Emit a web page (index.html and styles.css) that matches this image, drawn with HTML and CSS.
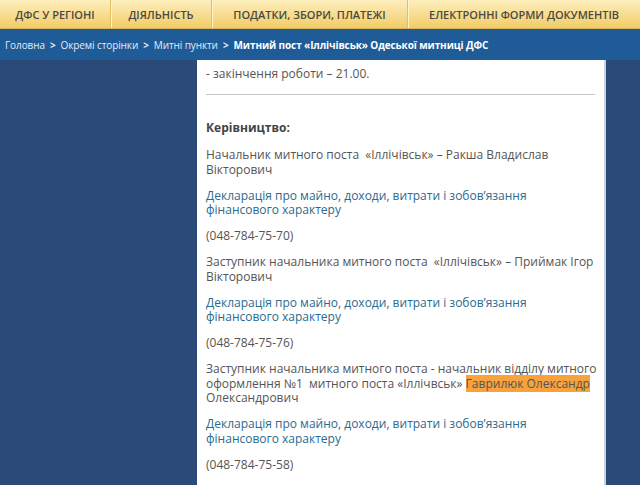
FILE: index.html
```html
<!DOCTYPE html>
<html lang="uk">
<head>
  <meta charset="UTF-8">
  <title>Митний пост «Іллічівськ»</title>
  <link rel="stylesheet" href="styles.css">
</head>
<body>
  <nav class="top-nav">
    <a class="nav-item nav-first" href="#">ДФС У РЕГІОНІ</a>
    <a class="nav-item nav-second" href="#">ДІЯЛЬНІСТЬ</a>
    <a class="nav-item nav-third" href="#">ПОДАТКИ, ЗБОРИ, ПЛАТЕЖІ</a>
    <a class="nav-item nav-last" href="#">ЕЛЕКТРОННІ ФОРМИ ДОКУМЕНТІВ</a>
  </nav>

  <div class="crumbs">
    <a href="#">Головна</a>
    <span class="sep">&gt;</span>
    <a href="#">Окремі сторінки</a>
    <span class="sep">&gt;</span>
    <a href="#">Митні пункти</a>
    <span class="sep">&gt;</span>
    <span class="current">Митний пост «Іллічівськ» Одеської митниці ДФС</span>
  </div>

  <div class="page">
    <div class="content">
      <p>- закінчення роботи – 21.00.</p>
      <hr>
      <p class="head">Керівництво:</p>

      <p>Начальник митного поста &nbsp;«Іллічівськ» – Ракша Владислав Вікторович</p>
      <p><a href="#">Декларація про майно, доходи, витрати і зобов’язання фінансового характеру</a></p>
      <p>(048-784-75-70)</p>

      <p>Заступник начальника митного поста &nbsp;«Іллічівськ» – Приймак Ігор Вікторович</p>
      <p><a href="#">Декларація про майно, доходи, витрати і зобов’язання фінансового характеру</a></p>
      <p>(048-784-75-76)</p>

      <p>Заступник начальника митного поста - начальник відділу митного оформлення №1 &nbsp;митного поста «Іллічвськ» <mark>Гаврилюк Олександр</mark> Олександрович</p>
      <p><a href="#">Декларація про майно, доходи, витрати і зобов’язання фінансового характеру</a></p>
      <p>(048-784-75-58)</p>
    </div>
  </div>
</body>
</html>
```

FILE: styles.css
```css
* {
  margin: 0;
  padding: 0;
  box-sizing: border-box;
}

body, html {
  height: 100%;
  background-color: #2c4a77;
  font-family: 'Open Sans', sans-serif;
}

.top-nav {
  display: flex;
  height: 29px;
  background: linear-gradient(#fdefbd, #f2cc68);
  border-bottom: 1px solid #d9b455;
}

.nav-item {
  display: flex;
  align-items: center;
  justify-content: center;
  height: 100%;
  color: #4b4a40;
  font-size: 11px;
  font-weight: 600;
  text-decoration: none;
  border-right: 1px solid #e2bf62;
  box-shadow: 1px 0 0 #fff3c8;
}

.nav-first { width: 111px; }
.nav-second { width: 101px; }
.nav-third { width: 196px; }
.nav-last { flex: 1; border-right: none; box-shadow: none; }

.crumbs {
  display: flex;
  align-items: center;
  gap: 5px;
  height: 31px;
  padding-left: 5px;
  background-color: #1f5b97;
  font-size: 10px;
  letter-spacing: -0.1px;
  color: #e3ecf6;
}

.crumbs a {
  color: #e3ecf6;
  text-decoration: none;
}

.crumbs .sep {
  font-weight: bold;
}

.crumbs .current {
  font-weight: bold;
  color: #fff;
}

.page {
  display: flex;
  padding-left: 197px;
}

.content {
  width: 409px;
  min-height: 430px;
  background: #fff;
  border-right: 2px solid #c9d3df;
  padding: 7px 3px 20px 9px;
  color: #555;
  font-size: 12px;
  line-height: 14.5px;
}

.content p {
  margin-bottom: 11.5px;
}

.content hr {
  border: none;
  border-top: 1px solid #c8c8c8;
  margin: 0 6px 26px 0;
}

.content p:first-child {
  margin-bottom: 12px;
}

.content .head {
  font-weight: bold;
  color: #444;
  margin-bottom: 13px;
}

.content a {
  color: #2a6b8e;
  text-decoration: none;
}

mark {
  background-color: #f7a23c;
  color: #555;
}
```
